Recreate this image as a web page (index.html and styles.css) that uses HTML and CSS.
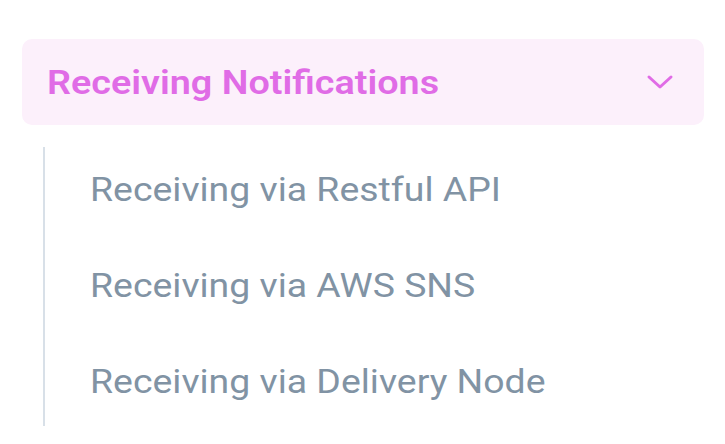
FILE: index.html
```html
<!DOCTYPE html>
<html>
<head>
<meta charset="utf-8">
<link rel="stylesheet" href="styles.css">
</head>
<body>
<nav class="sidebar">
  <div class="group-header">
    <span class="group-title">Receiving Notifications</span>
    <svg class="chevron" viewBox="0 0 28 16" width="28" height="16" aria-hidden="true">
      <path d="M3 3 L14 13 L25 3" fill="none" stroke="#e06ce6" stroke-width="3" stroke-linecap="round" stroke-linejoin="round"/>
    </svg>
  </div>
  <ul class="sub-list">
    <li class="sub-item"><span class="sub-text">Receiving via Restful API</span></li>
    <li class="sub-item"><span class="sub-text">Receiving via AWS SNS</span></li>
    <li class="sub-item"><span class="sub-text">Receiving via Delivery Node</span></li>
  </ul>
</nav>
</body>
</html>
```
FILE: styles.css
```css
html, body {
  margin: 0;
  padding: 0;
  background: #ffffff;
}
body {
  font-family: Roboto, "Liberation Sans", sans-serif;
  width: 725px;
  height: 444px;
  overflow: hidden;
}
.sidebar {
  padding: 39px 21px 0 22px;
}
.group-header {
  display: flex;
  align-items: center;
  justify-content: space-between;
  height: 86px;
  padding: 0 30px 0 25px;
  background: #fcf0fb;
  border-radius: 10px;
}
.group-title {
  display: inline-block;
  font-size: 34px;
  font-weight: 600;
  color: #e06ce6;
  transform: scaleX(1.11);
  transform-origin: left center;
  white-space: nowrap;
}
.chevron {
  display: block;
}
.sub-list {
  list-style: none;
  display: flex;
  flex-direction: column;
  margin: 22px 0 0 21px;
  padding: 0;
  border-left: 2px solid #d8e0e8;
  height: 279px;
}
.sub-item {
  flex: none;
  height: 96px;
  display: flex;
  align-items: center;
  padding-left: 45px;
  font-size: 34px;
  color: #8193a4;
}
.sub-item:first-child {
  margin-top: -6px;
}
.sub-text {
  display: inline-block;
  white-space: nowrap;
  transform: scaleX(1.1);
  transform-origin: left center;
}
```
